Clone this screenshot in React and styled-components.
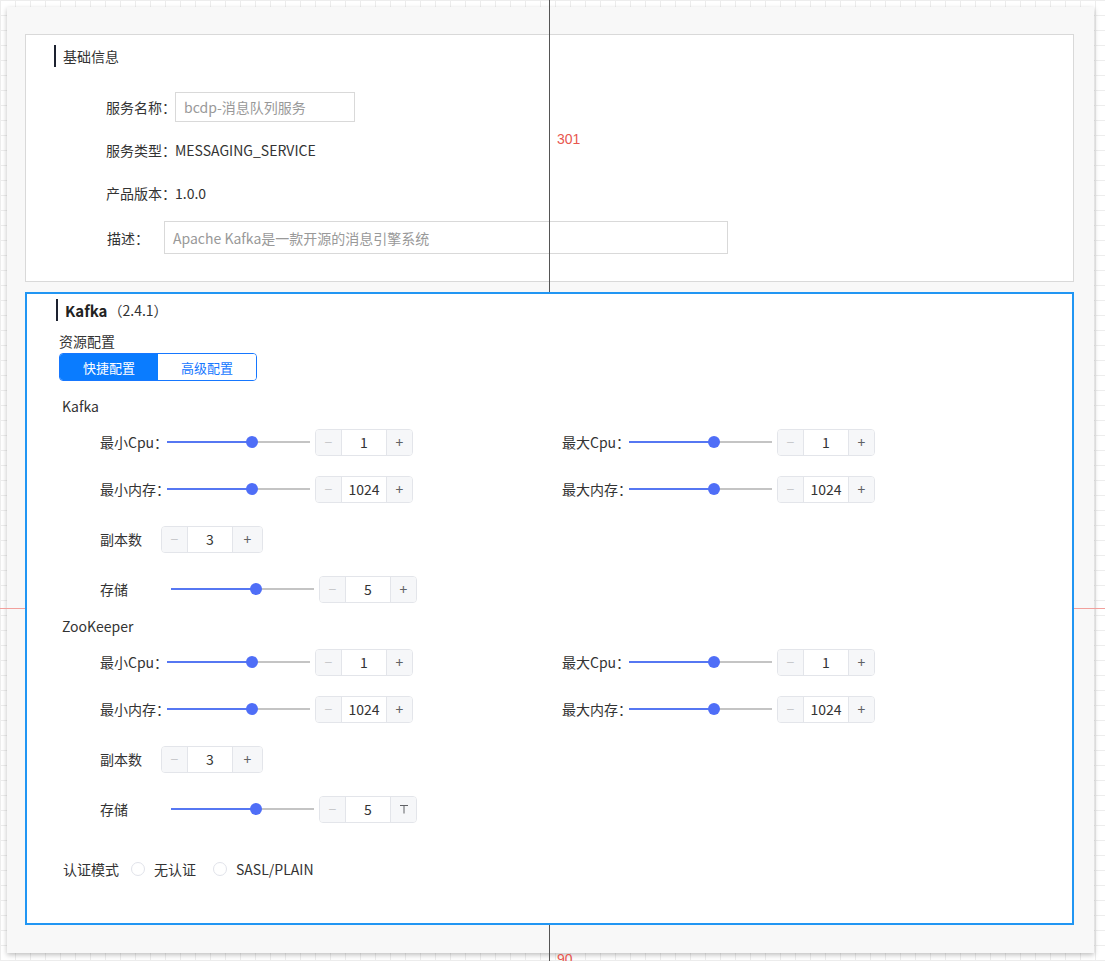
import React from "react";
import styled, { createGlobalStyle } from "styled-components";

const GlobalStyle = createGlobalStyle`
  html, body {
    margin: 0;
    padding: 0;
  }
  body {
    font-family: "Noto Sans CJK SC", "Noto Sans", sans-serif;
    color: #333;
    background-color: #fff;
    background-image: linear-gradient(#ededed 1px, transparent 1px),
      linear-gradient(90deg, #ededed 1px, transparent 1px);
    background-size: 15px 15px;
  }
`;

const Canvas = styled.div`
  position: relative;
  width: 1105px;
  height: 961px;
  overflow: hidden;
  padding: 7px;
  box-sizing: border-box;
`;

const Frame = styled.div`
  width: 1087px;
  height: 946px;
  background: #f8f8f8;
  box-shadow: 0 2px 5px rgba(0, 0, 0, 0.25);
  padding: 27px 20px 0 18px;
  box-sizing: border-box;
  display: flex;
  flex-direction: column;
  gap: 10px;
`;

const BaseCard = styled.div`
  height: 248px;
  border: 1px solid #d9d9d9;
  background: #fff;
  box-sizing: border-box;
  padding: 10px 0 0 28px;
`;

const KafkaCard = styled.div`
  position: relative;
  z-index: 2;
  height: 633px;
  border: 2px solid #2196f3;
  background: #fff;
  box-sizing: border-box;
  padding: 5px 0 0 29px;
`;

const Title = styled.div`
  display: flex;
  align-items: center;
  height: 22px;
  font-size: 14px;
  color: #333;
  &::before {
    content: "";
    width: 2px;
    height: 22px;
    background: #1d2230;
    margin-right: ${(p) => p.$gap || 7}px;
  }
  b {
    font-size: 15px;
    font-weight: 700;
    color: #222;
  }
  span {
    margin-left: 1px;
    font-size: 14px;
  }
`;

const InfoList = styled.div`
  display: flex;
  flex-direction: column;
  gap: 13px;
  margin-top: 25px;
  padding-left: 52px;
`;

const InfoRow = styled.div`
  display: flex;
  align-items: center;
  height: ${(p) => p.$h || 30}px;
  font-size: 14px;
`;

const InfoLabel = styled.span`
  width: ${(p) => p.$w}px;
  margin-left: ${(p) => p.$ml || 0}px;
  white-space: nowrap;
  color: #333;
`;

const TextBox = styled.div`
  width: ${(p) => p.$w}px;
  height: ${(p) => p.$h}px;
  border: 1px solid #d9d9d9;
  box-sizing: border-box;
  display: flex;
  align-items: center;
  padding-left: 8px;
  color: #999;
  font-size: 14px;
`;

const SubLabel = styled.div`
  margin-top: ${(p) => p.$mt}px;
  margin-left: ${(p) => p.$ml}px;
  height: 20px;
  line-height: 20px;
  font-size: 14px;
  color: #333;
`;

const Segmented = styled.div`
  display: flex;
  width: 198px;
  height: 28px;
  margin-left: 3px;
  margin-top: 2px;
  border: 1px solid #1677ff;
  border-radius: 4px;
  overflow: hidden;
  box-sizing: border-box;
`;

const Segment = styled.div`
  flex: 1;
  display: flex;
  align-items: center;
  justify-content: center;
  font-size: 13px;
  background: ${(p) => (p.$active ? "#0a7cff" : "#fff")};
  color: ${(p) => (p.$active ? "#fff" : "#1677ff")};
`;

const Block = styled.div`
  margin-top: ${(p) => p.$mt}px;
  padding-left: 44px;
`;

const Pair = styled.div`
  display: grid;
  grid-template-columns: 462px 1fr;
  row-gap: 19px;
`;

const Field = styled.div`
  display: flex;
  align-items: center;
  height: 28px;
  font-size: 14px;
  margin-top: ${(p) => p.$mt || 0}px;
`;

const FieldLabel = styled.span`
  width: ${(p) => p.$w}px;
  white-space: nowrap;
  color: #333;
`;

const SliderBox = styled.div`
  position: relative;
  width: 143px;
  height: 12px;
  margin-right: 5px;
  &::before {
    content: "";
    position: absolute;
    left: 0;
    right: 0;
    top: 5px;
    height: 2px;
    background: #c4c4c4;
  }
`;

const SliderFill = styled.div`
  position: absolute;
  left: 0;
  top: 5px;
  height: 2px;
  background: #5677f2;
`;

const Knob = styled.div`
  position: absolute;
  top: 0;
  width: 12px;
  height: 12px;
  margin-left: -6px;
  border-radius: 50%;
  background: #4f6ef7;
`;

const Stepper = styled.div`
  display: flex;
  height: 27px;
  border: 1px solid #e3e5ea;
  border-radius: 4px;
  overflow: hidden;
  box-sizing: border-box;
`;

const StepBtn = styled.div`
  width: ${(p) => p.$w || 25}px;
  display: flex;
  align-items: center;
  justify-content: center;
  background: #f6f7f9;
  color: ${(p) => (p.$off ? "#c8c9cc" : "#606266")};
  font-size: 14px;
`;

const StepValue = styled.div`
  width: 46px;
  box-sizing: border-box;
  display: flex;
  align-items: center;
  justify-content: center;
  border-left: 1px solid #e3e5ea;
  border-right: 1px solid #e3e5ea;
  background: #fff;
  font-size: 14px;
  color: #333;
`;

const AuthRow = styled.div`
  display: flex;
  align-items: center;
  margin-top: 36px;
  margin-left: 7px;
  height: 20px;
  font-size: 14px;
  color: #333;
`;

const Radio = styled.span`
  width: 14px;
  height: 14px;
  border-radius: 50%;
  border: 1px solid #e1e3ea;
  box-sizing: border-box;
  margin: 0 ${(p) => p.$mr}px 0 ${(p) => p.$ml}px;
`;

const GuideV = styled.div`
  position: absolute;
  z-index: 1;
  left: 549px;
  top: 0;
  width: 1px;
  height: 961px;
  background: #555;
`;

const GuideH = styled.div`
  position: absolute;
  z-index: 1;
  left: 0;
  top: 608px;
  width: 1105px;
  height: 1px;
  background: #f2a09c;
`;

const Measure = styled.div`
  position: absolute;
  z-index: 1;
  left: 557px;
  top: ${(p) => p.$top}px;
  font-family: "Liberation Sans", Arial, sans-serif;
  font-size: 14px;
  color: #e8574f;
`;

const TeeIcon = () => (
  <svg width="10" height="10" viewBox="0 0 10 10">
    <path d="M1 1.5h8M5 1.5v8" stroke="#606266" strokeWidth="1" fill="none" />
  </svg>
);

const Slider = ({ pct }) => (
  <SliderBox>
    <SliderFill style={{ width: `${pct}%` }} />
    <Knob style={{ left: `${pct}%` }} />
  </SliderBox>
);

const Counter = ({ value, plusW, tee }) => (
  <Stepper>
    <StepBtn $off>−</StepBtn>
    <StepValue>{value}</StepValue>
    <StepBtn $w={plusW}>{tee ? <TeeIcon /> : "+"}</StepBtn>
  </Stepper>
);

const SliderField = ({ label, value, w = 67 }) => (
  <Field>
    <FieldLabel $w={w}>{label}</FieldLabel>
    <Slider pct={59.5} />
    <Counter value={value} />
  </Field>
);

const Group = ({ name, mt, tee }) => (
  <>
    <SubLabel $mt={mt} $ml={6}>
      {name}
    </SubLabel>
    <Block $mt={12}>
      <Pair>
        <SliderField label="最小Cpu：" value="1" />
        <SliderField label="最大Cpu：" value="1" />
        <SliderField label="最小内存：" value="1024" />
        <SliderField label="最大内存：" value="1024" />
      </Pair>
      <Field $mt={22}>
        <FieldLabel $w={61}>副本数</FieldLabel>
        <Counter value="3" plusW={29} />
      </Field>
      <Field $mt={22}>
        <FieldLabel $w={71}>存储</FieldLabel>
        <Slider pct={59.5} />
        <Counter value="5" tee={tee} />
      </Field>
    </Block>
  </>
);

export default function App() {
  return (
    <>
      <GlobalStyle />
      <Canvas>
        <GuideV />
        <GuideH />
        <Measure $top={131}>301</Measure>
        <Measure $top={951}>90</Measure>
        <Frame>
          <BaseCard>
            <Title>基础信息</Title>
            <InfoList>
              <InfoRow>
                <InfoLabel $w={69}>服务名称：</InfoLabel>
                <TextBox $w={180} $h={30}>
                  bcdp-消息队列服务
                </TextBox>
              </InfoRow>
              <InfoRow>
                <InfoLabel $w={69}>服务类型：</InfoLabel>
                MESSAGING_SERVICE
              </InfoRow>
              <InfoRow>
                <InfoLabel $w={69}>产品版本：</InfoLabel>
                1.0.0
              </InfoRow>
              <InfoRow $h={33}>
                <InfoLabel $w={57} $ml={1}>
                  描述：
                </InfoLabel>
                <TextBox $w={564} $h={33}>
                  Apache Kafka是一款开源的消息引擎系统
                </TextBox>
              </InfoRow>
            </InfoList>
          </BaseCard>
          <KafkaCard>
            <Title $gap={7}>
              <b>Kafka</b>
              <span>（2.4.1）</span>
            </Title>
            <SubLabel $mt={10} $ml={3}>
              资源配置
            </SubLabel>
            <Segmented>
              <Segment $active>快捷配置</Segment>
              <Segment>高级配置</Segment>
            </Segmented>
            <Group name="Kafka" mt={15} />
            <Group name="ZooKeeper" mt={13} tee />
            <AuthRow>
              认证模式
              <Radio $ml={12} $mr={9} />
              无认证
              <Radio $ml={17} $mr={9} />
              SASL/PLAIN
            </AuthRow>
          </KafkaCard>
        </Frame>
      </Canvas>
    </>
  );
}
